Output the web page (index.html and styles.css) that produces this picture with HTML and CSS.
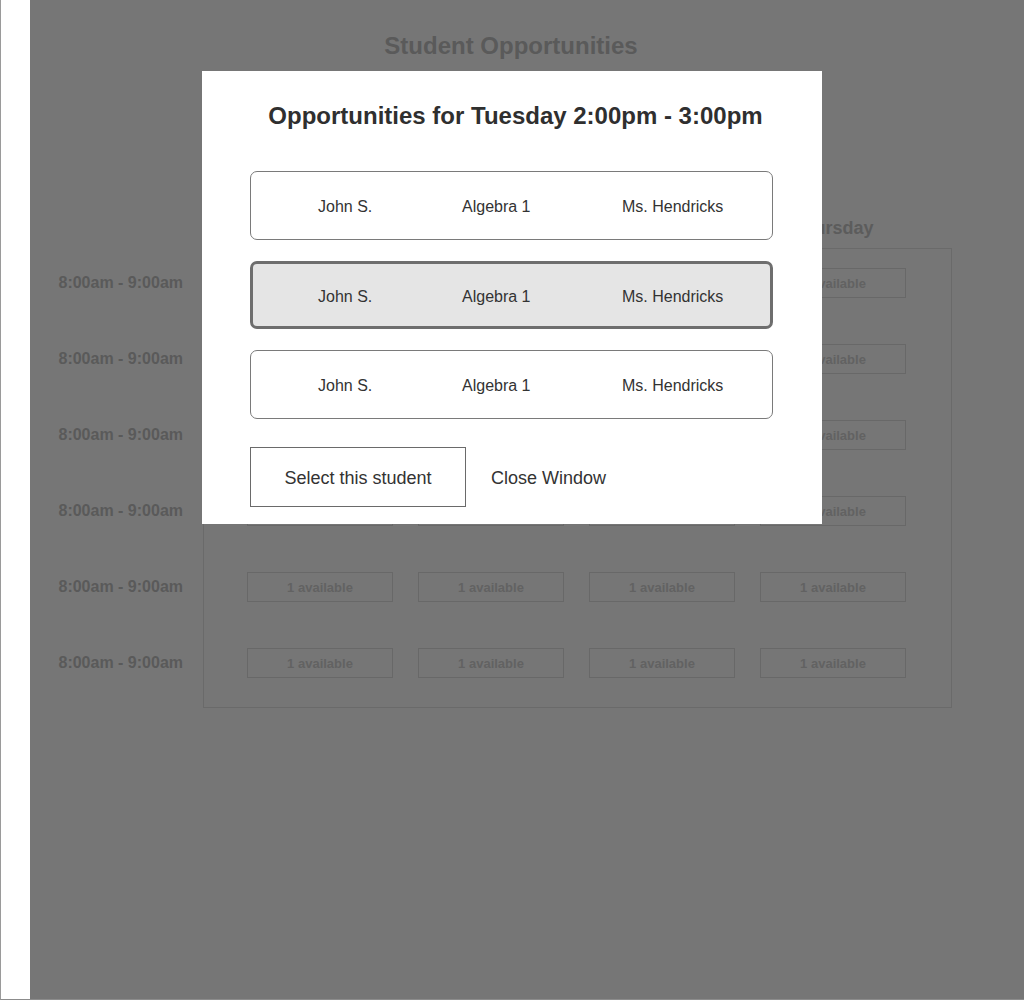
FILE: index.html
```html
<!DOCTYPE html>
<html lang="en">
<head>
<meta charset="utf-8">
<title>Student Opportunities</title>
<link rel="stylesheet" href="styles.css">
</head>
<body>
<div class="frame">
  <div class="gutter"></div>
  <main class="page" aria-hidden="true">
    <h1 class="page-title">Student Opportunities</h1>
    <div class="days">
      <div class="day">Monday</div>
      <div class="day">Tuesday</div>
      <div class="day">Wednesday</div>
      <div class="day">Thursday</div>
    </div>
    <div class="schedule">
      <div class="times">
        <div class="time">8:00am - 9:00am</div>
        <div class="time">8:00am - 9:00am</div>
        <div class="time">8:00am - 9:00am</div>
        <div class="time">8:00am - 9:00am</div>
        <div class="time">8:00am - 9:00am</div>
        <div class="time">8:00am - 9:00am</div>
      </div>
      <div class="grid">
        <div class="cell">1 available</div><div class="cell">1 available</div><div class="cell">1 available</div><div class="cell">1 available</div>
        <div class="cell">1 available</div><div class="cell">1 available</div><div class="cell">1 available</div><div class="cell">1 available</div>
        <div class="cell">1 available</div><div class="cell">1 available</div><div class="cell">1 available</div><div class="cell">1 available</div>
        <div class="cell">1 available</div><div class="cell">1 available</div><div class="cell">1 available</div><div class="cell">1 available</div>
        <div class="cell">1 available</div><div class="cell">1 available</div><div class="cell">1 available</div><div class="cell">1 available</div>
        <div class="cell">1 available</div><div class="cell">1 available</div><div class="cell">1 available</div><div class="cell">1 available</div>
      </div>
    </div>
  </main>

  <section class="modal" role="dialog">
    <h2 class="modal-title">Opportunities for Tuesday 2:00pm - 3:00pm</h2>
    <div class="options">
      <div class="option"><span>John S.</span><span>Algebra 1</span><span>Ms. Hendricks</span></div>
      <div class="option selected"><span>John S.</span><span>Algebra 1</span><span>Ms. Hendricks</span></div>
      <div class="option"><span>John S.</span><span>Algebra 1</span><span>Ms. Hendricks</span></div>
    </div>
    <div class="actions">
      <button class="btn btn-primary">Select this student</button>
      <button class="btn btn-link">Close Window</button>
    </div>
  </section>
</div>
</body>
</html>
```

FILE: styles.css
```css
* { box-sizing: border-box; }

html, body {
  margin: 0;
  padding: 0;
  background: #ffffff;
  font-family: "Liberation Sans", Arial, sans-serif;
}

.frame {
  position: relative;
  width: 1024px;
  height: 1000px;
  display: flex;
  border-left: 1px solid #9a9a9a;
  border-bottom: 1px solid #8c8c8c;
  overflow: hidden;
}

.gutter {
  width: 29px;
  flex: none;
  background: #ffffff;
}

.page {
  flex: 1;
  background: #767676;
  color: #5e5e5e;
}

.page-title {
  margin: 0;
  padding: 32px 32px 0 0;
  font-size: 24px;
  line-height: 28px;
  font-weight: bold;
  text-align: center;
  color: #5a5a5a;
}

.days {
  display: grid;
  grid-template-columns: repeat(4, 146px);
  column-gap: 25px;
  padding-left: 217px;
  margin-top: 157px;
  margin-bottom: 9px;
}

.day {
  font-size: 18px;
  line-height: 22px;
  font-weight: bold;
  text-align: center;
  color: #5c5c5c;
}

.schedule {
  display: flex;
}

.times {
  width: 173px;
  padding-top: 21px;
  display: flex;
  flex-direction: column;
  gap: 46px;
}

.time {
  height: 30px;
  line-height: 28px;
  padding-right: 20px;
  text-align: right;
  font-size: 16px;
  font-weight: bold;
  color: #5a5a5a;
}

.grid {
  width: 749px;
  display: grid;
  grid-template-columns: repeat(4, 146px);
  grid-auto-rows: 30px;
  column-gap: 25px;
  row-gap: 46px;
  padding: 19px 45px 29px 43px;
  border: 1px solid #6a6a6a;
}

.cell {
  border: 1px solid #686868;
  font-size: 13px;
  font-weight: bold;
  line-height: 29px;
  text-align: center;
  color: #626262;
}

.modal {
  position: absolute;
  left: 201px;
  top: 71px;
  width: 620px;
  height: 453px;
  background: #ffffff;
  padding: 31px 49px 0 48px;
  color: #333333;
}

.modal-title {
  margin: 0;
  font-size: 24px;
  line-height: 28px;
  font-weight: bold;
  text-align: center;
  color: #2f2f2f;
  padding-left: 8px;
}

.options {
  margin-top: 41px;
  display: flex;
  flex-direction: column;
  gap: 21px;
}

.option {
  height: 69px;
  display: grid;
  grid-template-columns: 144px 160px auto;
  align-items: center;
  padding: 3px 0 0 67px;
  border: 1px solid #7a7a7a;
  border-radius: 7px;
  font-size: 16px;
  color: #333333;
}

.option.selected {
  height: 68px;
  background: #e5e5e5;
  border: 3px solid #6e6e6e;
  padding: 3px 0 0 65px;
}

.actions {
  margin-top: 28px;
  display: flex;
  align-items: center;
  gap: 25px;
}

.btn {
  font-family: "Liberation Sans", Arial, sans-serif;
  font-size: 18px;
  color: #333333;
  background: #ffffff;
  cursor: pointer;
}

.btn-primary {
  width: 216px;
  height: 60px;
  border: 1px solid #6a6a6a;
  padding: 2px 0 0;
}

.btn-link {
  border: none;
  padding: 2px 0 0;
}
```
